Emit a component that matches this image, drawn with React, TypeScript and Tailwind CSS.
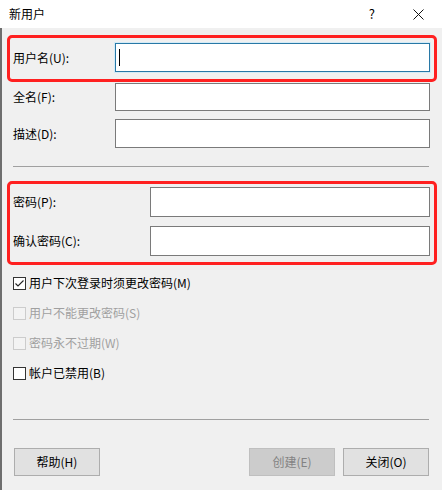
import React from "react";

const font = { fontFamily: '"Noto Sans CJK SC", "Noto Sans", sans-serif' };

function Check({ checked, disabled }: { checked?: boolean; disabled?: boolean }) {
  return (
    <div
      className={
        "w-[13px] h-[13px] border shrink-0 flex items-center justify-center " +
        (disabled ? "border-[#cccccc] bg-[#f3f3f3]" : "border-[#333333] bg-white")
      }
    >
      {checked && (
        <svg width="11" height="11" viewBox="0 0 11 11">
          <polyline points="1.5,5.5 4,8 9.5,2.5" fill="none" stroke="#222" strokeWidth="1.1" />
        </svg>
      )}
    </div>
  );
}

function CheckRow({ label, checked, disabled }: { label: string; checked?: boolean; disabled?: boolean }) {
  return (
    <div className="h-[20px] flex items-center gap-[3px]">
      <Check checked={checked} disabled={disabled} />
      <span className={"text-[12px] leading-none " + (disabled ? "text-[#a0a0a0]" : "text-black")}>{label}</span>
    </div>
  );
}

function Btn({ label, disabled }: { label: string; disabled?: boolean }) {
  return (
    <div
      className={
        "w-[86px] h-[28px] border flex items-center justify-center text-[12px] " +
        (disabled ? "bg-[#cccccc] border-[#bfbfbf] text-[#838383]" : "bg-[#e1e1e1] border-[#adadad] text-black")
      }
    >
      {label}
    </div>
  );
}

export default function App() {
  return (
    <div className="w-[442px] h-[490px] flex flex-col bg-[#f0f0f0] overflow-hidden" style={font}>
      <div className="h-[28px] bg-white flex items-center shrink-0">
        <span className="ml-[9px] text-[12px] text-black">新用户</span>
        <span className="ml-auto text-[13px] text-black mr-[38px]">?</span>
        <svg width="11" height="11" viewBox="0 0 11 11" className="mr-[18px]">
          <path d="M0.5 0.5 L10.5 10.5 M10.5 0.5 L0.5 10.5" stroke="#111" strokeWidth="1" />
        </svg>
      </div>
      <div className="flex-1 border-l-2 border-[#6e6e6e] pl-[11px] pr-[12px] flex flex-col">
        <div className="mt-[7px] ml-[-6px] mr-[-7px] pl-[3px] pr-[4px] pt-[5px] pb-[7px] border-[3px] border-[#ff2020] rounded-[5px]">
          <div className="flex items-center">
            <span className="w-[102px] text-[12px] text-black">用户名(U):</span>
            <div className="flex-1 h-[29px] border border-[#2878a6] bg-white shadow-[0_0_0_1px_#d3ebf7] flex items-center pl-[3px]">
              <div className="w-px h-[17px] bg-black" />
            </div>
          </div>
        </div>
        <div className="mt-[1px] flex items-center">
          <span className="w-[102px] text-[12px] text-black">全名(F):</span>
          <div className="flex-1 h-[28px] border border-[#7a7a7a] bg-white" />
        </div>
        <div className="mt-[8px] flex items-center">
          <span className="w-[102px] text-[12px] text-black">描述(D):</span>
          <div className="flex-1 h-[29px] border border-[#7a7a7a] bg-white" />
        </div>
        <div className="mt-[18px] h-px bg-[#a0a0a0] mr-[1px]" />
        <div className="mt-[14px] ml-[-6px] mr-[-7px] pl-[3px] pr-[4px] pt-[3px] pb-[6px] border-[3px] border-[#ff2020] rounded-[5px] flex flex-col gap-[9px]">
          <div className="flex items-center">
            <span className="w-[137px] text-[12px] text-black">密码(P):</span>
            <div className="flex-1 h-[30px] border border-[#7a7a7a] bg-white" />
          </div>
          <div className="flex items-center">
            <span className="w-[137px] text-[12px] text-black">确认密码(C):</span>
            <div className="flex-1 h-[30px] border border-[#7a7a7a] bg-white" />
          </div>
        </div>
        <div className="mt-[8px] flex flex-col gap-[10px]">
          <CheckRow label="用户下次登录时须更改密码(M)" checked />
          <CheckRow label="用户不能更改密码(S)" disabled />
          <CheckRow label="密码永不过期(W)" disabled />
          <CheckRow label="帐户已禁用(B)" />
        </div>
        <div className="mt-[36px] h-px bg-[#a0a0a0] mr-[1px]" />
        <div className="mt-[28px] flex items-center pl-[1px] pr-[1px]">
          <Btn label="帮助(H)" />
          <div className="flex-1" />
          <Btn label="创建(E)" disabled />
          <div className="w-[8px]" />
          <Btn label="关闭(O)" />
        </div>
      </div>
    </div>
  );
}
